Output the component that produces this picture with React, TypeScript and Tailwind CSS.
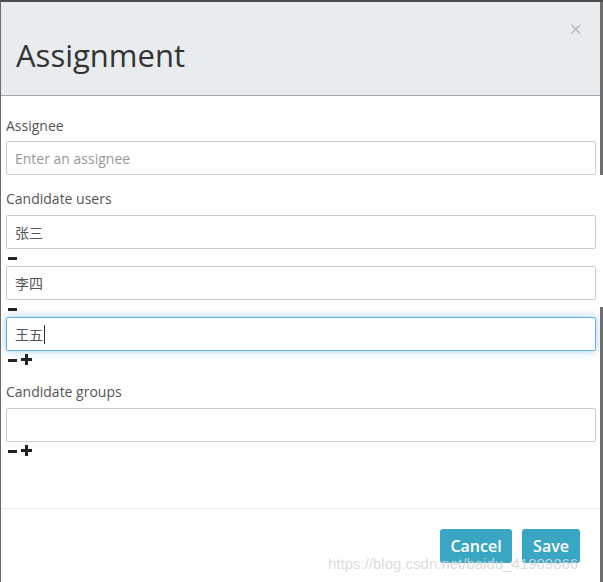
import React from "react";

const font = { fontFamily: '"Open Sans", "Noto Sans CJK SC", sans-serif' };

function Minus() {
  return (
    <svg width="9" height="10" viewBox="0 0 9 10" className="block">
      <rect x="0" y="4" width="9" height="3" fill="#222" />
    </svg>
  );
}

function Plus() {
  return (
    <svg width="11" height="11" viewBox="0 0 11 11" className="block">
      <rect x="0" y="4" width="11" height="3" fill="#222" />
      <rect x="4" y="0" width="3" height="11" fill="#222" />
    </svg>
  );
}

function Field({ children, focused }: { children?: React.ReactNode; focused?: boolean }) {
  return (
    <div
      className={
        "h-[34px] w-full rounded-[2px] border bg-white px-[8px] flex items-center text-[14px] text-[#555] " +
        (focused
          ? "border-[#66afe9] shadow-[0_0_8px_rgba(102,175,233,0.6)]"
          : "border-[#cccccc]")
      }
    >
      {children}
    </div>
  );
}

export default function App() {
  return (
    <div
      className="relative w-[603px] h-[582px] overflow-hidden bg-white border-t-2 border-t-[#4b4b4b] border-l border-l-[#6a6a6a]"
      style={font}
    >
      <div className="mr-[3px]">
        {/* header */}
        <div className="relative h-[94px] bg-[#e8ecef] border-b border-b-[#a3a8ae]">
          <div className="pl-[15px] pt-[35px] text-[31px] leading-[36px] text-[#333]">Assignment</div>
          <div className="absolute right-[18px] top-[14px] text-[22px] leading-[24px] text-[#b9bcbf]">×</div>
        </div>

        {/* body */}
        <div className="pl-[5px] pr-[4px] pt-[20px] h-[412px]">
          <div className="text-[14px] leading-[20px] text-[#555]">Assignee</div>
          <div className="mt-[5px]">
            <Field>
              <span className="text-[#999]">Enter an assignee</span>
            </Field>
          </div>

          <div className="mt-[14px] text-[14px] leading-[20px] text-[#555]">Candidate users</div>
          <div className="mt-[6px]">
            <Field>张三</Field>
          </div>
          <div className="h-[17px] flex items-center gap-[4px] pl-[2px]">
            <Minus />
          </div>
          <Field>李四</Field>
          <div className="h-[17px] flex items-center gap-[4px] pl-[2px]">
            <Minus />
          </div>
          <Field focused>
            王五
            <span className="inline-block w-px h-[19px] bg-[#333] ml-px" />
          </Field>
          <div className="h-[17px] flex items-center gap-[4px] pl-[2px]">
            <Minus />
            <Plus />
          </div>

          <div className="mt-[14px] text-[14px] leading-[20px] text-[#555]">Candidate groups</div>
          <div className="mt-[6px]">
            <Field />
          </div>
          <div className="h-[17px] flex items-center gap-[4px] pl-[2px]">
            <Minus />
            <Plus />
          </div>
        </div>

        {/* footer */}
        <div className="border-t border-t-[#e5e5e5] flex justify-end gap-[10px] pr-[20px] pt-[20px]">
          <div className="h-[34px] w-[72px] rounded-[3px] bg-[#39a7c4] text-white text-[16px] font-semibold flex items-center justify-center">
            Cancel
          </div>
          <div className="h-[34px] w-[58px] rounded-[3px] bg-[#39a7c4] text-white text-[16px] font-semibold flex items-center justify-center">
            Save
          </div>
        </div>
      </div>

      {/* page edge behind the dialog, on the right */}
      <div className="absolute right-0 top-0 w-[3px] h-[173px] bg-[#6e6e6e]" />
      <div className="absolute right-0 top-[305px] w-[3px] h-[277px] bg-[#6e6e6e]" />

      <div
        className="absolute left-[327px] top-[553px] text-[15px] leading-[18px] text-[rgba(215,215,215,0.9)] whitespace-nowrap"
        style={{ fontFamily: '"Liberation Sans", Arial, sans-serif' }}
      >
        https://blog.csdn.net/baidu_41909866
      </div>
    </div>
  );
}
